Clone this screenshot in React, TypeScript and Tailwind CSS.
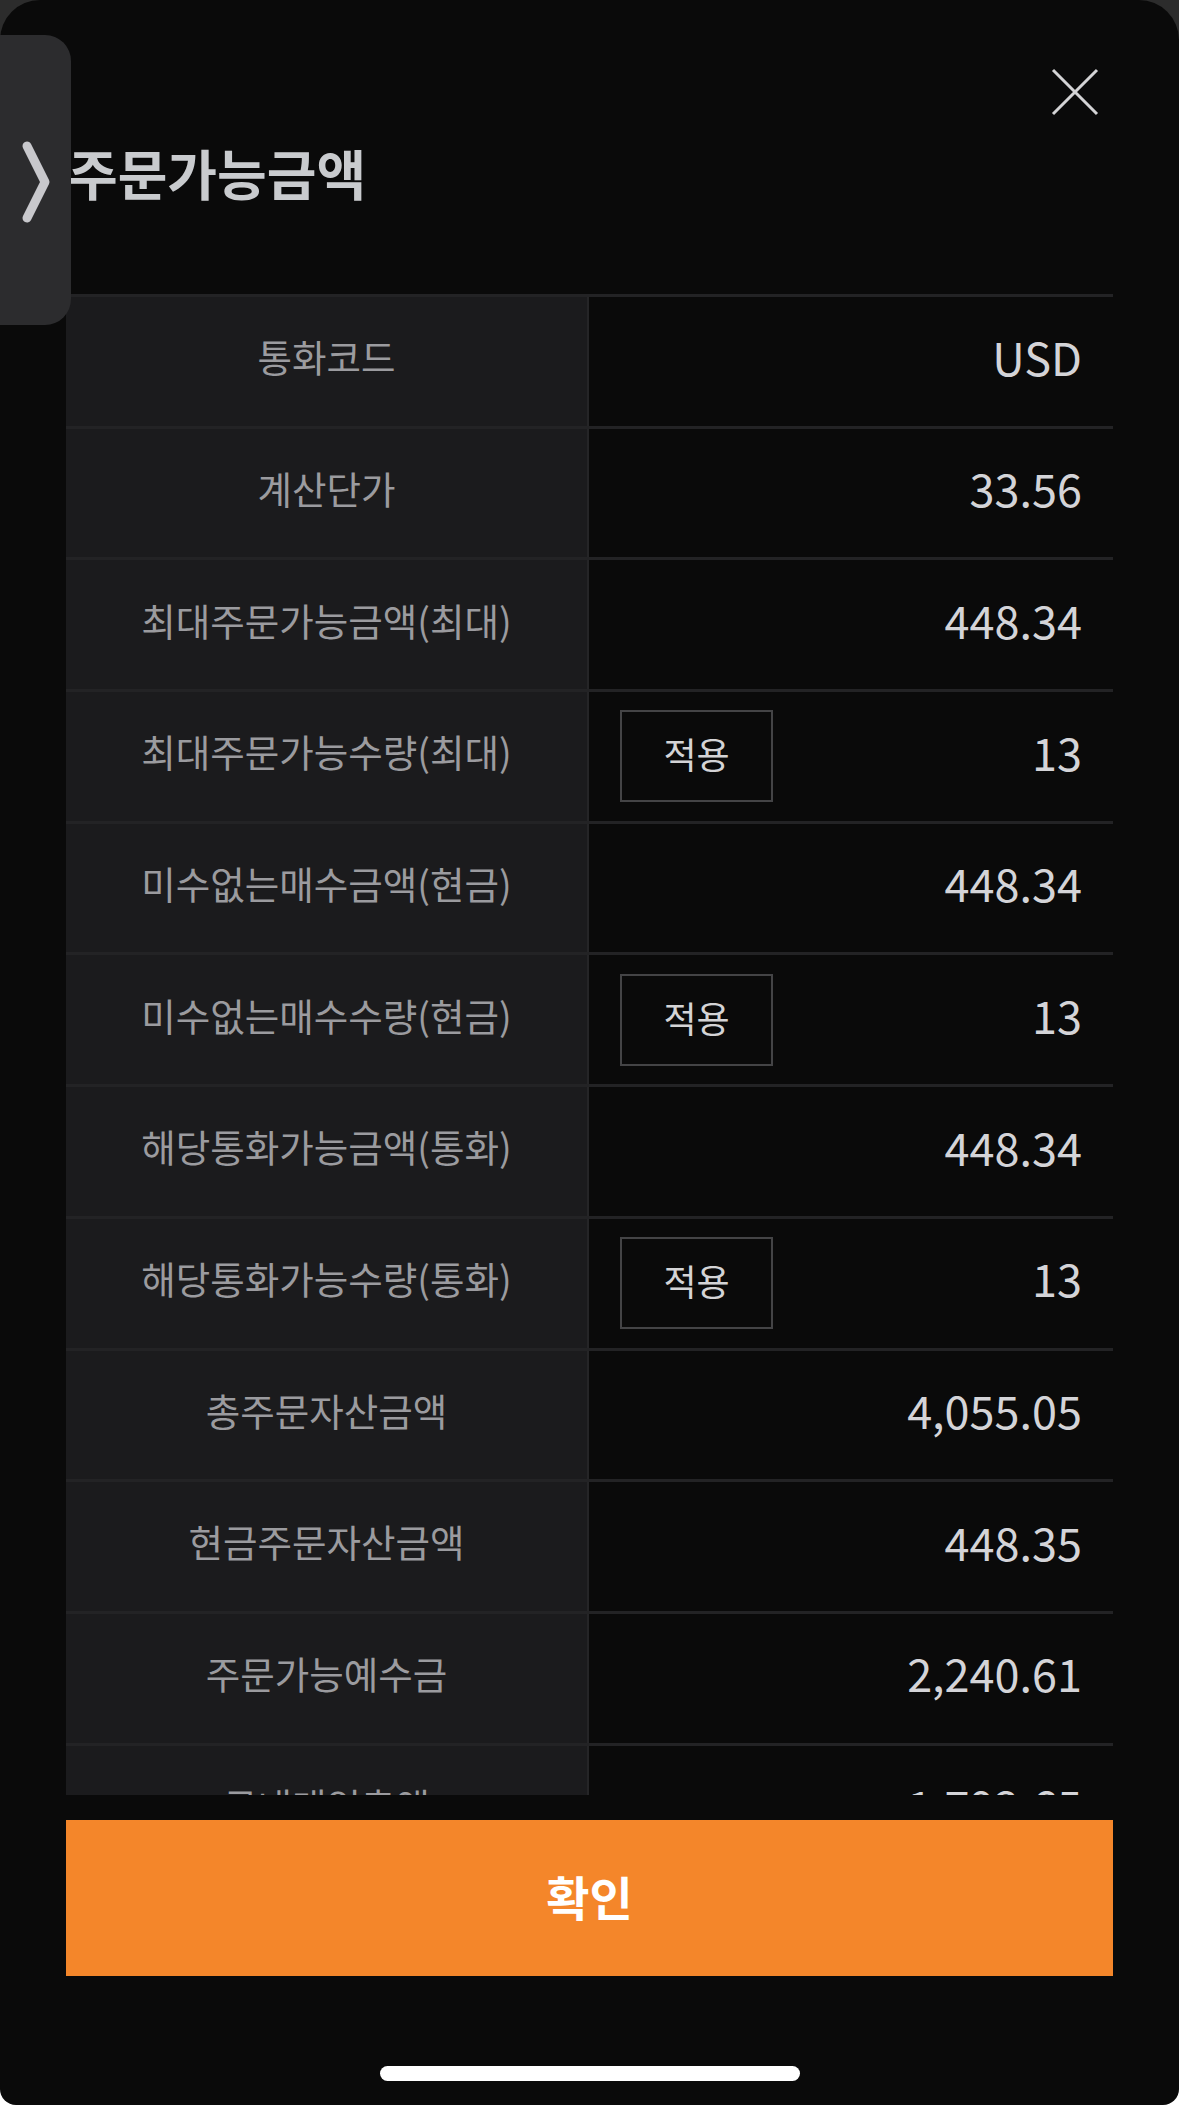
const ROWS: { label: string; value: string; apply?: boolean }[] = [
  { label: "통화코드", value: "USD" },
  { label: "계산단가", value: "33.56" },
  { label: "최대주문가능금액(최대)", value: "448.34" },
  { label: "최대주문가능수량(최대)", value: "13", apply: true },
  { label: "미수없는매수금액(현금)", value: "448.34" },
  { label: "미수없는매수수량(현금)", value: "13", apply: true },
  { label: "해당통화가능금액(통화)", value: "448.34" },
  { label: "해당통화가능수량(통화)", value: "13", apply: true },
  { label: "총주문자산금액", value: "4,055.05" },
  { label: "현금주문자산금액", value: "448.35" },
  { label: "주문가능예수금", value: "2,240.61" },
  { label: "국내매입총액", value: "1,792.65" },
];

const font = "font-['Noto_Sans_CJK_KR','Noto_Sans',sans-serif]";

export default function App() {
  return (
    <div className={`relative h-[2105px] w-[1179px] overflow-hidden bg-[linear-gradient(to_bottom,#2c2c2c_50%,#ffffff_50%)] ${font}`}>
      <div className="flex h-full flex-col rounded-t-[40px] rounded-b-[16px] bg-[#0a0a0a] px-[66px]">
        {/* header */}
        <div className="flex h-[294px] shrink-0 flex-col">
          <div className="flex justify-end pt-[68px] pr-[14px]">
            <svg width="48" height="48" viewBox="0 0 48 48" fill="none" stroke="#d4d4d6" strokeWidth="3">
              <path d="M2 2L46 46M46 2L2 46" />
            </svg>
          </div>
          <h1 className="mt-[28px] ml-[2px] text-[54px] leading-[58px] font-bold text-[#c9cbce]">주문가능금액</h1>
        </div>

        {/* table */}
        <div className="flex-1 overflow-hidden">
          {ROWS.map((r) => (
            <div key={r.label} className="grid h-[131.7px] grid-cols-[523px_1fr] border-t-[3px] border-[#232325]">
              <div className="flex items-center justify-center border-r-2 border-[#252527] bg-[#1b1b1d] pb-[10px] text-[37.5px] text-[#9b9b9f]">
                {r.label}
              </div>
              <div className="flex items-center justify-between pl-[31px] pr-[31px]">
                {r.apply ? (
                  <button className="flex h-[92px] w-[153px] items-center justify-center border-2 border-[#444446] pb-[6px] text-[36px] text-[#d4d4d6]">
                    적용
                  </button>
                ) : (
                  <span />
                )}
                <span className="pb-[10px] text-[45px] text-[#d4d4d8]">{r.value}</span>
              </div>
            </div>
          ))}
        </div>

        <button className="mt-[25px] h-[156px] shrink-0 bg-[#f4862a] pb-[4px] text-[47px] font-bold text-white">확인</button>

        <div className="mx-auto mt-[90px] mb-[24px] h-[15px] w-[420px] shrink-0 rounded-full bg-white" />
      </div>

      {/* side handle */}
      <div className="absolute top-[35px] left-0 flex h-[290px] w-[71px] items-center rounded-r-[26px] bg-[#2c2c2e]">
        <svg width="71" height="100" viewBox="0 0 71 100" fill="none" stroke="#c8c8cc" strokeWidth="9" strokeLinecap="round" strokeLinejoin="round">
          <path d="M27 16L45 52L27 88" />
        </svg>
      </div>
    </div>
  );
}
